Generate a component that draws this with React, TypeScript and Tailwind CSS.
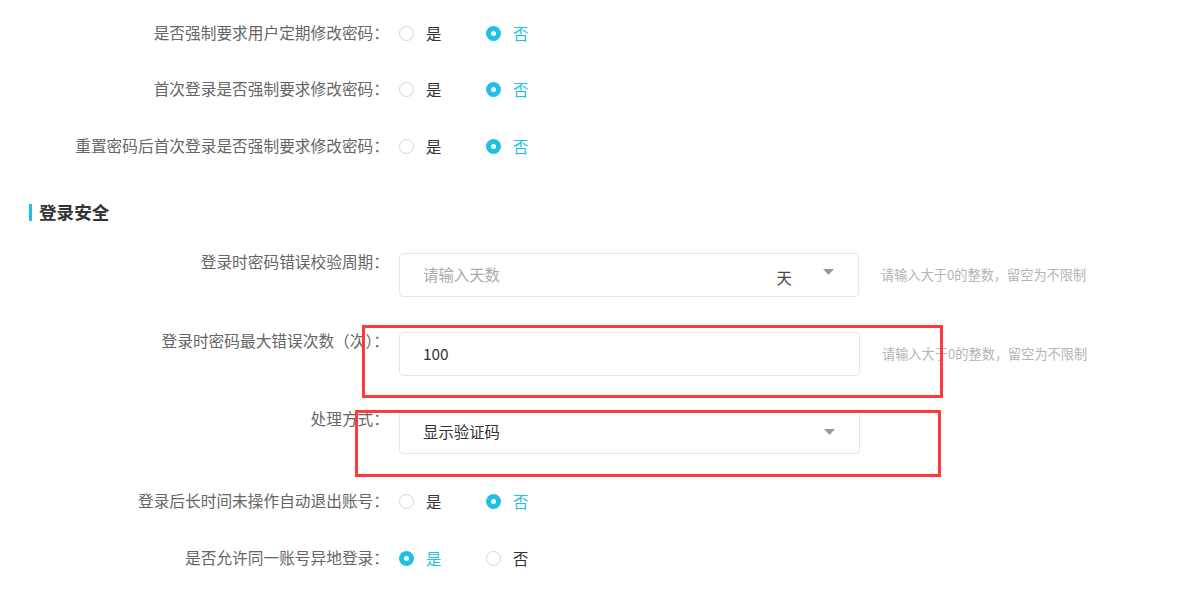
import React from 'react';

const Radio: React.FC<{ label: string; checked?: boolean }> = ({ label, checked }) => (
  <label className="flex items-center w-[87px] cursor-pointer">
    {checked ? (
      <span className="w-[15px] h-[15px] rounded-full bg-[#1ec1e3] flex items-center justify-center">
        <span className="w-[5px] h-[5px] rounded-full bg-white" />
      </span>
    ) : (
      <span className="w-[15px] h-[15px] rounded-full border border-[#d2d5da] bg-white" />
    )}
    <span className={`ml-[12px] text-[15.4px] leading-5 ${checked ? 'text-[#1ec1e3]' : 'text-[#333333]'}`}>{label}</span>
  </label>
);

const RadioRow: React.FC<{ label: string; yes?: boolean; className?: string }> = ({ label, yes, className }) => (
  <div className={`flex items-center h-5 ${className ?? ''}`}>
    <div className="w-[389px] text-right text-[15.7px] leading-5 text-[#666666]">{label}</div>
    <div className="ml-[10px] flex items-center">
      <Radio label="是" checked={yes} />
      <Radio label="否" checked={!yes} />
    </div>
  </div>
);

const Caret = () => (
  <svg width="11" height="6" viewBox="0 0 11 6" className="shrink-0">
    <path d="M0 0h11L5.5 6z" fill="#9a9a9a" />
  </svg>
);

const Hint = () => (
  <span className="ml-[22px] self-center text-[13.2px] text-[#b4b4b4]">请输入大于0的整数，留空为不限制</span>
);

export default function App() {
  return (
    <div
      className="relative w-[1197px] h-[599px] bg-white overflow-hidden"
      style={{ fontFamily: '"Noto Sans CJK SC", "Noto Sans", sans-serif' }}
    >
      <div className="flex flex-col pt-[23px]">
        <RadioRow label="是否强制要求用户定期修改密码：" />
        <RadioRow label="首次登录是否强制要求修改密码：" className="mt-[36px]" />
        <RadioRow label="重置密码后首次登录是否强制要求修改密码：" className="mt-[37px]" />

        <div className="mt-[45px] ml-[29px] flex items-center h-[22px]">
          <span className="w-[3px] h-[17px] bg-[#1ec1e3]" />
          <span className="ml-[7px] text-[17.6px] font-bold text-[#333333]">登录安全</span>
        </div>

        <div className="mt-[30px] flex items-start">
          <div className="w-[389px] text-right text-[15.7px] leading-[18px] text-[#666666]">登录时密码错误校验周期：</div>
          <div className="ml-[10px] w-[460px] h-[44px] rounded-[4px] border border-[#e4e6ea] flex items-center pl-[23px] pr-[24px]">
            <span className="flex-1 text-[15.4px] text-[#a8abb2]">请输入天数</span>
            <span className="text-[15.4px] text-[#444] mt-[6px]">天</span>
            <span className="ml-[31px] -mt-[6px]"><Caret /></span>
          </div>
          <Hint />
        </div>

        <div className="mt-[35px] flex items-start">
          <div className="w-[389px] text-right text-[15.7px] leading-[18px] text-[#666666]">登录时密码最大错误次数（次）：</div>
          <div className="ml-[10px] w-[461px] h-[44px] rounded-[4px] border border-[#e4e6ea] flex items-center pl-[23px]">
            <span className="text-[15.4px] text-[#333333]">100</span>
          </div>
          <Hint />
        </div>

        <div className="mt-[34px] flex items-start">
          <div className="w-[389px] text-right text-[15.7px] leading-[18px] text-[#666666]">处理方式：</div>
          <div className="ml-[10px] w-[461px] h-[44px] rounded-[4px] border border-[#e4e6ea] flex items-center pl-[23px] pr-[24px]">
            <span className="flex-1 text-[15.4px] text-[#333333]">显示验证码</span>
            <Caret />
          </div>
        </div>

        <RadioRow label="登录后长时间未操作自动退出账号：" className="mt-[37px]" />
        <RadioRow label="是否允许同一账号异地登录：" yes className="mt-[37px]" />
      </div>

      {/* annotation boxes */}
      <div className="absolute left-[362px] top-[325px] w-[581px] h-[73px] border-[3px] border-[#ff3a3a]" />
      <div className="absolute left-[355px] top-[410px] w-[586px] h-[67px] border-[3px] border-[#ff3a3a]" />
    </div>
  );
}
